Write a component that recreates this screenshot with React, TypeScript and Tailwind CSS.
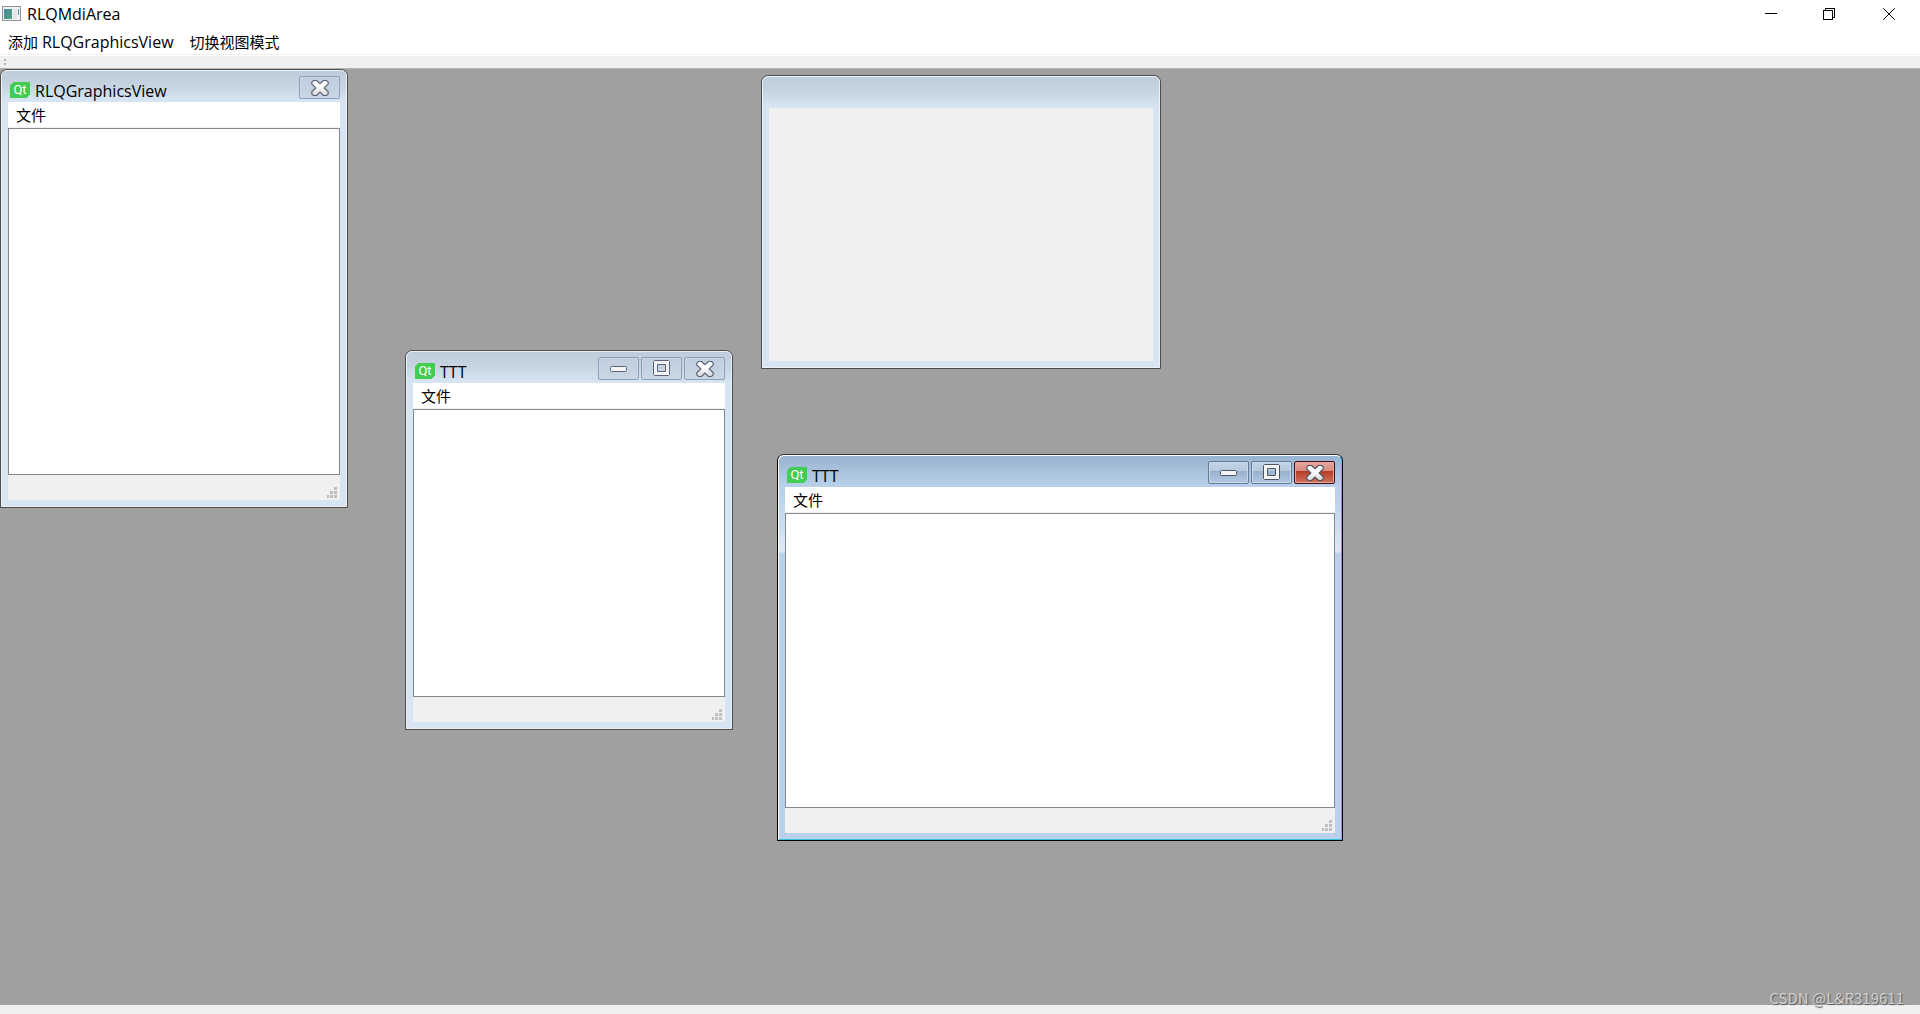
import type { ReactNode } from "react";

type SubWindowProps = {
  title?: string;
  place: string;
  active?: boolean;
  controls?: ("minimize" | "maximize" | "close")[];
};

const windows: SubWindowProps[] = [
  { place: "left-0 top-0 w-[348px] h-[439px]", title: "RLQGraphicsView", controls: ["close"] },
  { place: "left-[761px] top-[6px] w-[400px] h-[294px]" },
  {
    place: "left-[405px] top-[281px] w-[328px] h-[380px]",
    title: "TTT",
    controls: ["minimize", "maximize", "close"],
  },
  {
    place: "left-[777px] top-[385px] w-[566px] h-[387px]",
    title: "TTT",
    active: true,
    controls: ["minimize", "maximize", "close"],
  },
];

function AppIcon() {
  return (
    <svg width="19" height="16" viewBox="0 0 19 16" shapeRendering="crispEdges">
      <defs>
        <linearGradient id="app-pane" x1="0" y1="0" x2="1" y2="1">
          <stop offset="0" stopColor="#4a86a8" />
          <stop offset="1" stopColor="#4fa377" />
        </linearGradient>
      </defs>
      <rect width="19" height="15" fill="#8e979f" />
      <rect x="1" y="1" width="17" height="13" fill="#f1f3f5" />
      <rect x="2" y="3" width="8" height="10" fill="url(#app-pane)" />
      <rect x="11" y="3" width="4" height="10" fill="#e3e5e7" />
      <rect x="16" y="3" width="1" height="6" fill="#5a9aa0" />
    </svg>
  );
}

function QtIcon() {
  return (
    <svg width="20" height="16" viewBox="0 0 20 16">
      <path d="M3.5 0H20V12.5L16.5 16H0V3.5Z" fill="#41cd52" />
      <text
        x="10"
        y="12"
        textAnchor="middle"
        fontSize="13"
        fontWeight="400"
        fontFamily="Roboto, sans-serif"
        fill="#fff"
      >
        Qt
      </text>
    </svg>
  );
}

function ControlGlyph({ kind, stroke }: { kind: string; stroke: string }) {
  if (kind === "minimize") {
    return (
      <svg width="17" height="17" viewBox="0 0 17 17">
        <rect x="0.5" y="6.5" width="16" height="5" rx="1" fill="#f4f4f4" stroke={stroke} />
      </svg>
    );
  }
  if (kind === "maximize") {
    return (
      <svg width="17" height="17" viewBox="0 0 17 17">
        <path
          d="M1.5 .5H15.5L16.5 1.5V14.5L15.5 15.5H1.5L.5 14.5V1.5Z M4.5 4.5V11.5H12.5V4.5Z"
          fill="#f2f2f2"
          fillRule="evenodd"
          stroke={stroke}
        />
      </svg>
    );
  }
  return (
    <svg width="18" height="16" viewBox="0 0 18 16">
      <defs>
        <linearGradient id="close-cross" x1="0" y1="0" x2="0" y2="1">
          <stop offset="0.4" stopColor="#fff" />
          <stop offset="1" stopColor="#d6d6d6" />
        </linearGradient>
      </defs>
      <path
        d="M2.5 .5H5.5L9 3.8L12.5 .5H15.5L17.2 2.2V4L13.2 7.9L17.2 11.8V13.8L15.5 15.5H12.5L9 12.1L5.5 15.5H2.5L.8 13.8V11.8L4.8 7.9L.8 4V2.2Z"
        fill="url(#close-cross)"
        stroke={stroke}
        strokeWidth="1.2"
      />
    </svg>
  );
}

function ControlButton({ kind, active }: { kind: string; active?: boolean }) {
  let look = "border-[#8d9db9] bg-linear-to-b from-[#c0cedd] to-[#c9d6e4] shadow-[inset_0_0_0_1px_#cbd8e6]";
  if (active) {
    look =
      "border-[#667a91] bg-[linear-gradient(#c3d4e6_0%,#b5c9dd_44%,#99b1cc_45%,#b1c9e4_100%)] shadow-[inset_0_0_0_1px_#c8daeb]";
  }
  if (active && kind === "close") {
    look =
      "border-[#43101a] bg-[linear-gradient(#e4a69c_0%,#d88b7f_44%,#b53b25_45%,#d0735f_100%)] shadow-[inset_0_0_0_1px_#e2a89e]";
  }
  return (
    <button
      type="button"
      aria-label={kind}
      className={`flex h-[23px] w-[41px] items-center justify-center rounded-xs border ${look}`}
    >
      <ControlGlyph kind={kind} stroke={active ? "#4c5666" : "#5b6478"} />
    </button>
  );
}

function SizeGrip() {
  return (
    <svg width="10" height="11" viewBox="0 0 10 11" fill="#bfbfbf" shapeRendering="crispEdges">
      <path d="M7 0h3v3h-3z M3 4h3v3h-3z M7 4h3v3h-3z M0 8h2v3h-2z M3 8h3v3h-3z M7 8h3v3h-3z" />
    </svg>
  );
}

function MenuButton({ children }: { children: ReactNode }) {
  return (
    <button type="button" className="px-2 text-[15px] leading-5">
      {children}
    </button>
  );
}

function SubWindow({ title, place, active, controls = [] }: SubWindowProps) {
  const edge = active
    ? "border-black border-t-[#333]"
    : "border-[#4d4d4d]";
  const frame = active
    ? "border-t-white border-l-white border-r-[#35c3e0] border-b-[#35c3e0] bg-[linear-gradient(#99b4d1_0px,#b9d1ea_31px,#b9d1ea_40px,#dfe9f5_96px,#b9d1ea_97px)]"
    : "border-[#eaf1f9] bg-[linear-gradient(#bfcddb_0px,#c6d3e0_14px,#d7e4f2_30px)]";

  return (
    <section className={`absolute flex flex-col rounded-t-[7px] border ${edge} ${place}`}>
      <div className={`flex min-h-0 flex-1 flex-col rounded-t-md border px-[6px] pb-[6px] ${frame}`}>
        <header className="flex h-[31px] shrink-0 items-start justify-between pt-[5px]">
          {title ? (
            <div className="flex items-start gap-[5px] pt-[6px] pl-[2px]">
              <QtIcon />
              <h2 className="leading-[18px]">{title}</h2>
            </div>
          ) : null}
          <div className="flex gap-[2px]">
            {controls.map((kind) => (
              <ControlButton key={kind} kind={kind} active={active} />
            ))}
          </div>
        </header>
        {title ? (
          <>
            <nav className="flex h-[26px] shrink-0 items-center border-b border-[#f0f0f0] bg-white">
              <MenuButton>文件</MenuButton>
            </nav>
            <div className="flex-1 border border-[#828790] bg-white" />
            <footer className="flex h-[25px] shrink-0 items-end justify-end bg-[#f0f0f0] pr-[3px] pb-[2px]">
              <SizeGrip />
            </footer>
          </>
        ) : (
          <div className="flex-1 bg-[#f0f0f0]" />
        )}
      </div>
    </section>
  );
}

export default function App() {
  return (
    <div className="flex h-screen flex-col overflow-hidden bg-[#f0f0f0] font-['Open_Sans','Noto_Sans_CJK_SC',sans-serif] text-base text-black">
      <header className="flex h-7 shrink-0 items-center justify-between bg-white pl-[2px]">
        <div className="flex items-center gap-[6px]">
          <AppIcon />
          <h1 className="leading-5">RLQMdiArea</h1>
        </div>
        <div className="flex">
          <button type="button" aria-label="Minimize" className="flex h-7 w-[58px] items-center justify-center">
            <svg width="12" height="12" shapeRendering="crispEdges">
              <path d="M0 5.5H12" stroke="#000" />
            </svg>
          </button>
          <button type="button" aria-label="Restore" className="flex h-7 w-[58px] items-center justify-center">
            <svg width="12" height="12" fill="none" stroke="#000" shapeRendering="crispEdges">
              <path d="M.5 2.5H9.5V11.5H.5Z M2.5 2.5V.5H11.5V9.5H9.5" />
            </svg>
          </button>
          <button type="button" aria-label="Close" className="flex h-7 w-[62px] items-center justify-center">
            <svg width="12" height="12" stroke="#000">
              <path d="M.3 .3L11.7 11.7M11.7 .3L.3 11.7" />
            </svg>
          </button>
        </div>
      </header>

      <nav className="flex h-[27px] shrink-0 items-center border-b border-[#f0f0f0] bg-white pt-px">
        <MenuButton>
          添加 <span className="text-base">RLQGraphicsView</span>
        </MenuButton>
        <MenuButton>切换视图模式</MenuButton>
      </nav>

      <div className="flex h-[14px] shrink-0 items-center border-t border-b border-t-white border-b-[#b4b4b4] pl-1">
        <svg width="2" height="6" fill="#b0b0b0" shapeRendering="crispEdges">
          <path d="M0 0h2v2h-2z M0 4h2v2h-2z" />
        </svg>
      </div>

      <main className="relative flex-1 overflow-hidden bg-[#a0a0a0]">
        {windows.map((win) => (
          <SubWindow key={win.place} {...win} />
        ))}
      </main>

      <footer className="relative h-[9px] shrink-0">
        <p className="absolute right-4 bottom-1 font-['Noto_Sans_CJK_SC',sans-serif] text-[15px] leading-6 text-[#d2d2d2] [text-shadow:1px_1px_1px_#555]">
          CSDN @L&amp;R319611
        </p>
      </footer>
    </div>
  );
}
